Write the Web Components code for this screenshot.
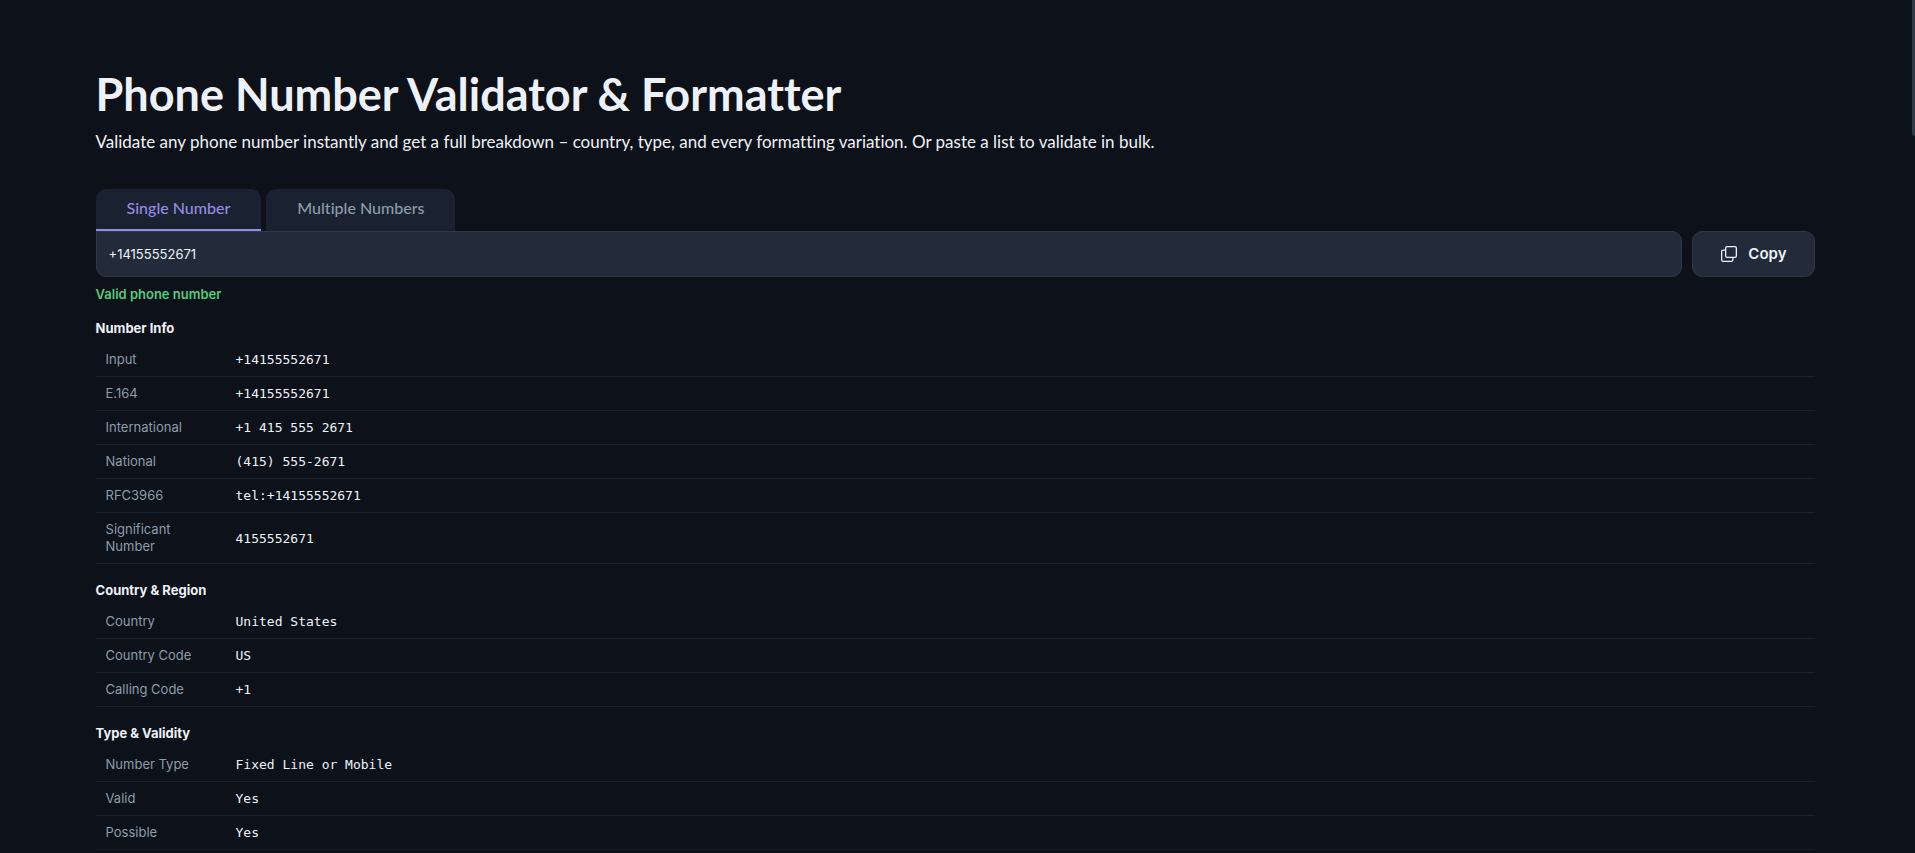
<!DOCTYPE html>
<html lang="en">
<head>
<meta charset="utf-8">
<title>Phone Number Validator &amp; Formatter</title>
<style>
html { background: #0d1119; }
body {
  margin: 0;
  color: #eef2f7;
  font-family: Inter, "Open Sans", sans-serif;
  font-size: 13px;
  --display: Lato, Inter, sans-serif;
  --surface: #1a2130;
  --field: #232b3b;
  --edge: #2f3747;
  --line: #1b212b;
  --muted: #8c9dab;
  --accent: #968be0;
  --success: #52cc7c;
}
</style>
</head>
<body>
<phone-page>
  <page-heading>
    <span slot="title">Phone Number Validator &amp; Formatter</span>
    <span slot="lead">Validate any phone number instantly and get a full breakdown – country, type, and every formatting variation. Or paste a list to validate in bulk.</span>
  </page-heading>
  <tab-bar>
    <tab-item selected>Single Number</tab-item>
    <tab-item>Multiple Numbers</tab-item>
  </tab-bar>
  <number-field value="+14155552671"></number-field>
  <status-line>Valid phone number</status-line>
  <info-section heading="Number Info"></info-section>
  <info-section heading="Country &amp; Region"></info-section>
  <info-section heading="Type &amp; Validity"></info-section>
</phone-page>
<scroll-thumb></scroll-thumb>

<script>
function define(name, html, ready) {
  const template = document.createElement('template');
  template.innerHTML = html;
  customElements.define(name, class extends HTMLElement {
    constructor() {
      super();
      this.attachShadow({ mode: 'open' }).append(template.content.cloneNode(true));
    }
    connectedCallback() {
      if (ready) ready(this, this.shadowRoot);
    }
  });
}

define('phone-page', `
  <style>
    :host { display: block; margin-right: 4px; }
    main { padding: 65px 5% 0; }
  </style>
  <main><slot></slot></main>`);

define('page-heading', `
  <style>
    :host { display: block; margin-bottom: 34px; font-family: var(--display); font-variant-ligatures: none; }
    h1 { margin: 0 0 6px; font-size: 45px; line-height: 58px; font-weight: 700; }
    p { margin: 0; font-size: 17px; line-height: 26px; }
  </style>
  <h1><slot name="title"></slot></h1>
  <p><slot name="lead"></slot></p>`);

define('tab-bar', `
  <style>
    :host { display: flex; gap: 5px; }
  </style>
  <slot></slot>`, (el) => el.setAttribute('role', 'tablist'));

define('tab-item', `
  <style>
    :host { display: block; }
    button {
      height: 42px; padding: 0 31px 4px; border: 0;
      border-radius: 10px 10px 0 0; background: var(--surface); color: var(--muted);
      font: 500 16px/20px var(--display); font-variant-ligatures: none; cursor: pointer; display: block;
    }
    :host([selected]) button {
      color: var(--accent);
      background: linear-gradient(var(--accent), var(--accent)) bottom / 100% 2px no-repeat var(--surface);
    }
  </style>
  <button type="button" role="tab"><slot></slot></button>`,
  (el, root) => root.querySelector('button').setAttribute('aria-selected', el.hasAttribute('selected')));

define('number-field', `
  <style>
    :host { display: flex; gap: 10px; }
    input, button {
      box-sizing: border-box; height: 46px; border: 1px solid var(--edge);
      border-radius: 10px; background: var(--field); color: inherit;
    }
    input {
      flex: 1; min-width: 0; padding: 0 12px; border-top-left-radius: 0;
      font: 13px Inter, sans-serif; outline: none;
    }
    button {
      display: flex; align-items: center; justify-content: center; gap: 11px;
      padding: 0 28px; font: 600 15px/20px Inter, sans-serif; cursor: pointer;
    }
  </style>
  <input type="text" aria-label="Phone number">
  <button type="button">
    <svg width="16" height="16" viewBox="0 0 16 16" fill="none" stroke="currentColor" stroke-width="1.3" aria-hidden="true">
      <rect x="4.65" y=".65" width="10.7" height="10.7" rx="1.4"/>
      <path d="M4.6 4.15H2.2Q.65 4.15.65 5.7v8.1q0 1.55 1.55 1.55h8.1q1.55 0 1.55-1.55V11.4"/>
    </svg>
    <span>Copy</span>
  </button>`,
  (el, root) => { root.querySelector('input').value = el.getAttribute('value'); });

define('status-line', `
  <style>
    :host { display: block; margin-top: 10px; color: var(--success); font-weight: 600; line-height: 15px; }
  </style>
  <slot></slot>`, (el) => el.setAttribute('role', 'status'));

const details = {
  'Number Info': [
    ['Input', '+14155552671'],
    ['E.164', '+14155552671'],
    ['International', '+1 415 555 2671'],
    ['National', '(415) 555-2671'],
    ['RFC3966', 'tel:+14155552671'],
    ['Significant Number', '4155552671'],
  ],
  'Country & Region': [
    ['Country', 'United States'],
    ['Country Code', 'US'],
    ['Calling Code', '+1'],
  ],
  'Type & Validity': [
    ['Number Type', 'Fixed Line or Mobile'],
    ['Valid', 'Yes'],
    ['Possible', 'Yes'],
  ],
};

define('info-section', `
  <style>
    :host { display: block; margin-top: 16px; }
    h2 { margin: 0 0 5px; font-size: 13px; line-height: 20px; font-weight: 700; }
    table { width: 100%; border-collapse: separate; border-spacing: 0; table-layout: fixed; }
    th, td {
      box-sizing: border-box; padding: 8px 10px; border-bottom: 1px solid var(--line);
      line-height: 17px; text-align: left; vertical-align: middle;
    }
    th { width: 130px; color: var(--muted); font-weight: 400; }
    td { font-family: "DejaVu Sans Mono", monospace; }
  </style>
  <h2></h2>
  <table><tbody></tbody></table>`,
  (el, root) => {
    const heading = el.getAttribute('heading');
    root.querySelector('h2').textContent = heading;
    const body = root.querySelector('tbody');
    for (const [label, value] of details[heading]) {
      const row = body.insertRow();
      const th = document.createElement('th');
      th.scope = 'row';
      th.textContent = label;
      row.append(th);
      row.insertCell().textContent = value;
    }
  });

define('scroll-thumb', `
  <style>
    :host {
      display: block; position: fixed; top: 0; right: 0; width: 3px; height: 16vh;
      background: #2f394b; border-bottom-left-radius: 3px;
    }
  </style>`, (el) => el.setAttribute('aria-hidden', 'true'));
</script>
</body>
</html>
